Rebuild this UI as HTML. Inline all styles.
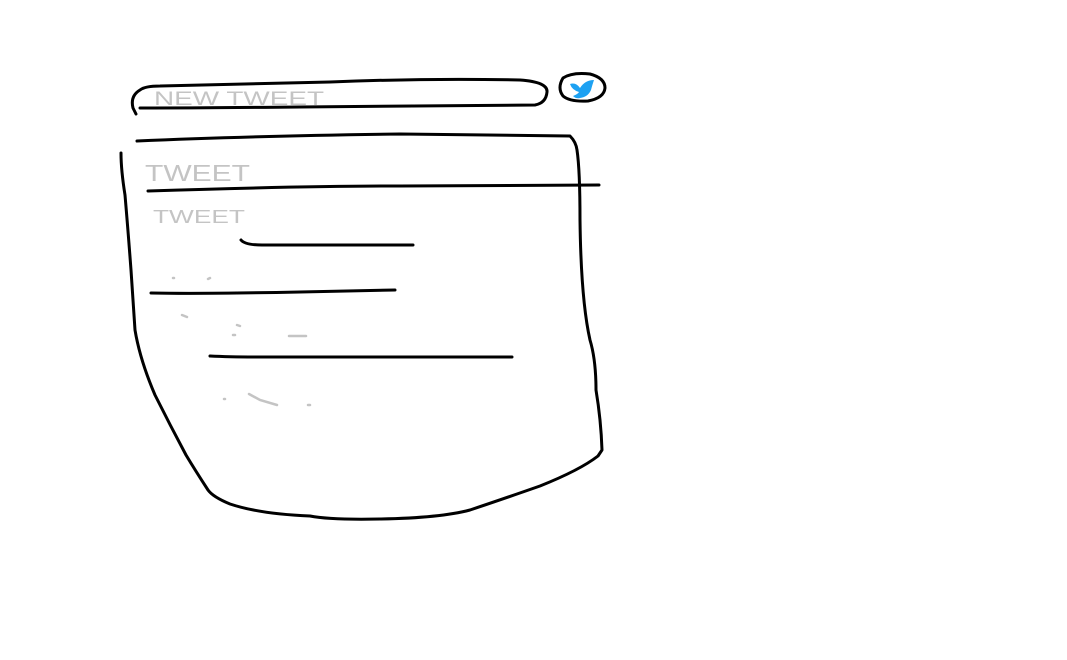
<!DOCTYPE html>
<html><head><meta charset="utf-8"><style>
html,body{margin:0;padding:0;background:#fff;width:1067px;height:660px;overflow:hidden}
svg{display:block}
</style></head><body>
<svg width="1067" height="660" viewBox="0 0 1067 660" xmlns="http://www.w3.org/2000/svg">
<g fill="none" stroke="#000" stroke-width="3" stroke-linecap="round" stroke-linejoin="round">
<path d="M136 114 L133 108 Q130 96 140 90 Q145 86 160 86 L330 82 Q430 78 520 80 Q548 82 547 92 Q546 103 535 105 L300 107 Q200 108 140 108"/>
<path d="M563 78 Q572 72 590 74 Q605 78 605 88 Q604 98 588 101 Q570 102 563 96 Q557 88 563 78 Z"/>
<path d="M137 141 Q250 136 400 134 L570 136 Q576 142 577 150 Q580 170 580 220 Q581 300 590 340 Q596 360 596 390 Q601 420 602 450 L598 456 Q580 470 540 486 Q500 500 470 510 Q440 518 380 519 Q330 520 310 516 Q260 514 230 504 Q213 497 208 490 Q195 470 186 455 Q170 425 155 395 Q140 360 135 330 Q133 300 131 270 Q128 230 125 195 Q121 170 121 153"/>
<path d="M148 191 Q300 186 400 186 L599 185"/>
<path d="M241 240 Q245 245 262 245 L413 245"/>
<path d="M151 293 Q200 294 300 292 L395 290"/>
<path d="M210 356 Q230 357 260 357 L512 357"/>
</g>
<path d="M570 84 Q576 82 580 88 Q585 80 594 80 Q592 86 591 90 Q588 97 580 98 Q576 99 573 96 Q578 94 579 92 Q572 90 570 84 Z" fill="#1da1f2"/>
<g fill="#c4c4c4" font-family="Liberation Sans, sans-serif">
<text x="154" y="105" font-size="19" textLength="170" lengthAdjust="spacingAndGlyphs">NEW TWEET</text>
<text x="145" y="181" font-size="23" textLength="105" lengthAdjust="spacingAndGlyphs">TWEET</text>
<text x="153" y="223" font-size="18" textLength="92" lengthAdjust="spacingAndGlyphs">TWEET</text>
</g>
<g stroke="#c4c4c4" stroke-width="2.5" stroke-linecap="round" fill="none">
<path d="M182 315 L187 317"/><path d="M237 325 L240 326"/><path d="M233 335 L235 335"/><path d="M289 336 L306 336"/>
<path d="M224 399 L225 399"/><path d="M249 394 L260 400 L277 405"/><path d="M308 405 L310 405"/>
<path d="M208 279 L210 278"/><path d="M173 278 L174 278"/>
</g>
</svg>
</body></html>
